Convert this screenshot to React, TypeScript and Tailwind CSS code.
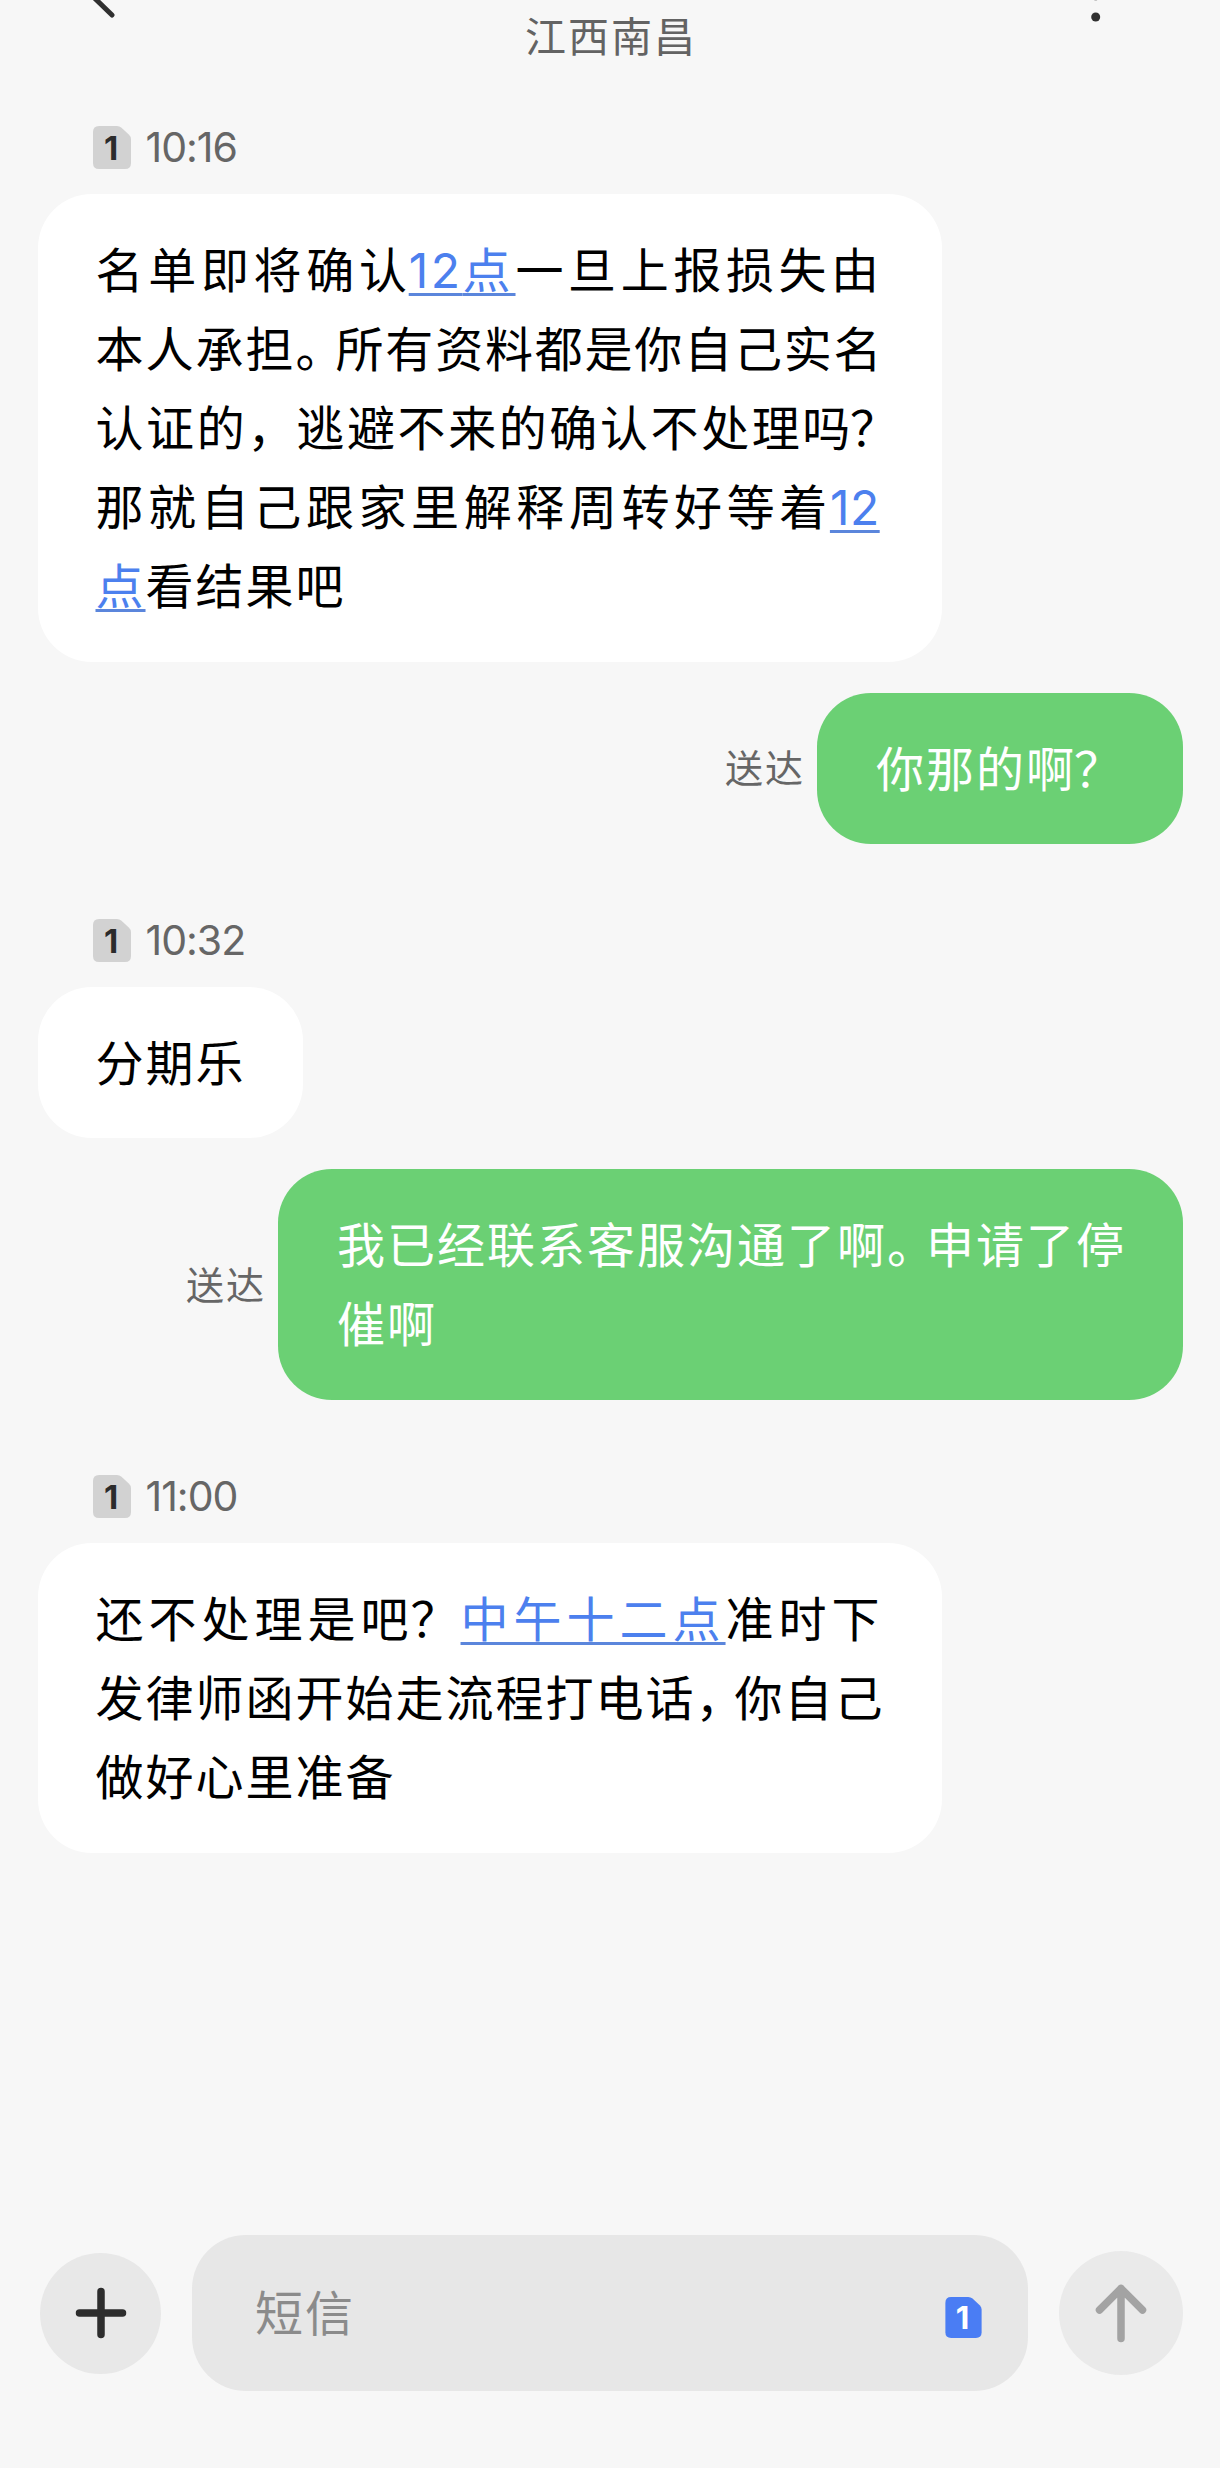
import clsx from "clsx"

interface Segment {
    text: string;
    className?: string;
    link?: boolean;
}

interface BubbleProps {
    lines: Segment[][];
    sent?: boolean;
    className?: string;
}

// full-width punctuation
const COMMA = "\uFF0C";
const QUESTION = "\uFF1F";

const FIRST_MESSAGE: Segment[][] = [
    [
        { text: "名单即将确认", className: "tracking-[4.7px]" },
        { text: "12", className: "font-['Inter',sans-serif] leading-none tracking-[2.5px] -ml-[3px]", link: true },
        { text: "点", className: "tracking-[5px]", link: true },
        { text: "一旦上报损失由", className: "tracking-[4.6px]" },
    ],
    [
        { text: "本人承担" },
        { text: "。", className: "tracking-[-8px]" },
        { text: "所有资料都是你自己实名", className: "tracking-[1.8px]" },
    ],
    [
        { text: "认证的", className: "tracking-[2.6px]" },
        { text: COMMA, className: "tracking-[1px]" },
        { text: "逃避不来的确认不处理吗", className: "tracking-[2.6px]" },
        { text: QUESTION, className: "tracking-[-16px] -ml-[3px]" },
    ],
    [
        { text: "那就自己跟家里解释周转好等着", className: "tracking-[4.6px]" },
        { text: "12", className: "font-['Inter',sans-serif] leading-none tracking-[0.5px] -ml-[2px]", link: true },
    ],
    [
        { text: "点", link: true },
        { text: "看结果吧" },
    ],
];

const LAST_MESSAGE: Segment[][] = [
    [
        { text: "还不处理是吧", className: "tracking-[5px]" },
        { text: QUESTION, className: "tracking-[2px] -ml-[3px]" },
        { text: "中午十二点", className: "tracking-[5px]", link: true },
        { text: "准时下", className: "tracking-[5px]" },
    ],
    [
        { text: "发律师函开始走流程打电话" },
        { text: COMMA, className: "tracking-[-9px]" },
        { text: "你自己" },
    ],
    [{ text: "做好心里准备" }],
];

const SimBadge = ({ active = false }: { active?: boolean }) => (
    <svg
        viewBox="0 0 38 43"
        className={clsx("shrink-0", active ? "w-[37px] h-[41px]" : "w-[38px] h-[43px]")}
    >
        <path
            d="M6 0H24Q26.500 0 28.500 1.700L36 8.700Q38 10.600 38 13V37Q38 43 32 43H6Q0 43 0 37V6Q0 0 6 0Z"
            className={active ? "fill-[#4a7df4]" : "fill-[#d2d2d2]"}
        />
        <text
            x="18"
            y="34"
            textAnchor="middle"
            className={clsx("font-['Inter',sans-serif] font-bold text-[33px]", active ? "fill-white" : "fill-[#2b2b2b]")}
        >
            1
        </text>
    </svg>
)

const TimeRow = ({ time, className }: { time: string; className: string }) => (
    <div className={clsx("flex items-center h-[43px] pl-[93px] gap-[14.500px]", className)}>
        <SimBadge />
        <span className="font-['Inter',sans-serif] text-[41px] leading-[43px] tracking-[-1px] text-[#666666]">{time}</span>
    </div>
)

const Bubble = ({ lines, sent, className }: BubbleProps) => (
    <div
        className={clsx(
            "rounded-[54px] pt-[34px] pb-[38.300px] text-[48px] leading-[79.200px] tracking-[2px] whitespace-nowrap",
            sent ? "pl-[59px] bg-[#6bd074] text-white" : "pl-[58px] bg-white text-black",
            className
        )}
    >
        {lines.map((line, i) => (
            <p key={i} className="h-[79.200px]">
                {line.map((segment, j) => (
                    <span
                        key={j}
                        className={clsx(
                            segment.className,
                            segment.link && "text-[#4c80ee] underline decoration-[#5b86dc] decoration-[3px] underline-offset-[5px]"
                        )}
                    >
                        {segment.text}
                    </span>
                ))}
            </p>
        ))}
    </div>
)

const SentRow = ({ lines, className }: { lines: Segment[][]; className: string }) => (
    <div className="flex justify-end items-center gap-[12px] mt-[31px] pr-[37px]">
        <span className="pb-[4px] text-[38px] leading-[48px] tracking-[2px] text-[#666666]">送达</span>
        <Bubble lines={lines} sent className={className} />
    </div>
)

export default function App() {
    return (
        <div className="flex flex-col w-[1220px] h-[2468px] overflow-hidden bg-[#f7f7f7] font-['Noto_Sans_CJK_SC',sans-serif]">
            <header className="flex justify-between h-[72px] px-[80px]">
                <svg viewBox="0 0 40 24" className="w-[40px] h-[24px]">
                    <path d="M0 -16L32 15" fill="none" stroke="#303030" strokeWidth="5" strokeLinecap="round" />
                </svg>
                <h1 className="pl-[2px] text-[41px] leading-[69px] tracking-[2px] text-[#636363]">江西南昌</h1>
                <svg viewBox="0 0 60 24" className="w-[60px] h-[24px] -ml-[20px]">
                    <circle cx="15.700" cy="-4.200" r="4.500" fill="#303030" />
                    <circle cx="15.700" cy="17" r="4.500" fill="#303030" />
                </svg>
            </header>

            <main className="flex-1 flex flex-col items-stretch">
                <TimeRow time="10:16" className="mt-[54px] mb-[24.500px]" />
                <div className="flex pl-[37.500px]">
                    <Bubble lines={FIRST_MESSAGE} className="w-[904px]" />
                </div>

                <SentRow
                    className="w-[366px]"
                    lines={[[{ text: "你那的啊" }, { text: QUESTION, className: "-ml-[2px]" }]]}
                />

                <TimeRow time="10:32" className="mt-[74.500px] mb-[25px]" />
                <div className="flex pl-[37.500px]">
                    <Bubble lines={[[{ text: "分期乐" }]]} className="w-[265px]" />
                </div>

                <SentRow
                    className="w-[905px]"
                    lines={[
                        [
                            { text: "我已经联系客服沟通了啊" },
                            { text: "。", className: "tracking-[-9px]" },
                            { text: "申请了停" },
                        ],
                        [{ text: "催啊" }],
                    ]}
                />

                <TimeRow time="11:00" className="mt-[75px] mb-[25px]" />
                <div className="flex pl-[37.500px]">
                    <Bubble lines={LAST_MESSAGE} className="w-[904px]" />
                </div>
            </main>

            <footer className="flex items-center h-[156px] mb-[77px] pl-[40px] pr-[37px]">
                <button className="flex items-center justify-center size-[121px] rounded-full bg-[#e8e8e8]">
                    <svg viewBox="0 0 52 52" className="size-[52px]">
                        <path d="M26 4.500V47.500M4.500 26H47.500" fill="none" stroke="#2d2d2d" strokeWidth="7.500" strokeLinecap="round" />
                    </svg>
                </button>
                <div className="flex items-center justify-between flex-1 h-[156px] ml-[31px] mr-[31px] pl-[63px] pr-[46px] rounded-[54px] bg-[#e7e7e7]">
                    <span className="pb-[7px] text-[48px] tracking-[2px] text-[#8b8b8b]">短信</span>
                    <div className="pt-[8px]">
                        <SimBadge active />
                    </div>
                </div>
                <button className="flex items-center justify-center size-[124px] rounded-full bg-[#eaeaea]">
                    <svg viewBox="0 0 52 60" className="w-[52px] h-[60px]">
                        <path d="M26 55.500V5.500M4.500 27L26 5.500L47.500 27" fill="none" stroke="#a3a3a3" strokeWidth="7.500" strokeLinecap="round" strokeLinejoin="round" />
                    </svg>
                </button>
            </footer>
        </div>
    )
}
